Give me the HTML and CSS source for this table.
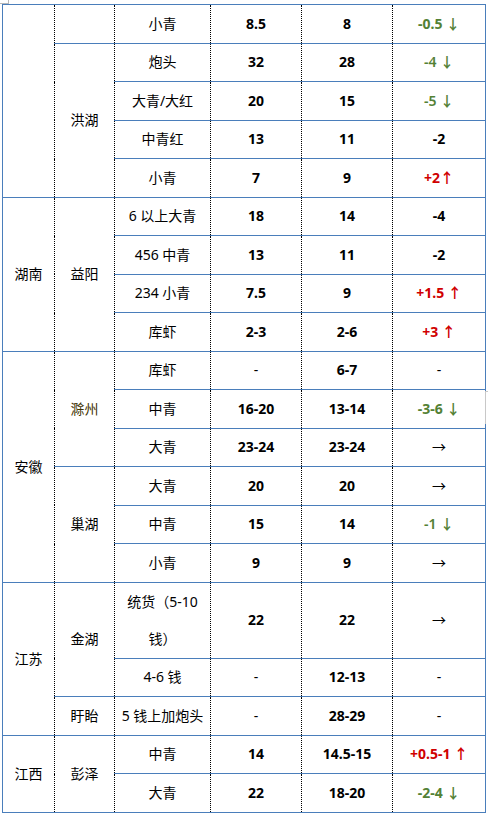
FILE: index.html
```html
<!DOCTYPE html>
<html lang="zh-CN">
<head>
<meta charset="utf-8">
<link rel="stylesheet" href="styles.css">
</head>
<body>
<div class="page">
  <span class="mark-tl"></span>
  <span class="mark-r"></span>
  <table class="price">
    <colgroup>
      <col class="c1"><col class="c2"><col class="c3"><col class="c4"><col class="c5"><col class="c6">
    </colgroup>
    <tbody>
      <tr><td rowspan="5"></td><td></td><td>小青</td><td class="n">8.5</td><td class="n">8</td><td class="n down">-0.5 ↓</td></tr>
      <tr><td rowspan="4">洪湖</td><td>炮头</td><td class="n">32</td><td class="n">28</td><td class="down lt">-4 ↓</td></tr>
      <tr><td>大青/大红</td><td class="n">20</td><td class="n">15</td><td class="down lt">-5 ↓</td></tr>
      <tr><td>中青红</td><td class="n">13</td><td class="n">11</td><td class="n">-2</td></tr>
      <tr><td>小青</td><td class="n">7</td><td class="n">9</td><td class="n up">+2↑</td></tr>

      <tr><td rowspan="4">湖南</td><td rowspan="4">益阳</td><td>6 以上大青</td><td class="n">18</td><td class="n">14</td><td class="n">-4</td></tr>
      <tr><td>456 中青</td><td class="n">13</td><td class="n">11</td><td class="n">-2</td></tr>
      <tr><td>234 小青</td><td class="n">7.5</td><td class="n">9</td><td class="n up">+1.5 ↑</td></tr>
      <tr><td>库虾</td><td class="n">2-3</td><td class="n">2-6</td><td class="n up">+3 ↑</td></tr>

      <tr><td rowspan="6">安徽</td><td rowspan="3" class="brown">滁州</td><td>库虾</td><td>-</td><td class="n">6-7</td><td>-</td></tr>
      <tr><td>中青</td><td class="n">16-20</td><td class="n">13-14</td><td class="n down">-3-6 ↓</td></tr>
      <tr><td>大青</td><td class="n">23-24</td><td class="n">23-24</td><td>→</td></tr>
      <tr><td rowspan="3">巢湖</td><td>大青</td><td class="n">20</td><td class="n">20</td><td>→</td></tr>
      <tr><td>中青</td><td class="n">15</td><td class="n">14</td><td class="down lt">-1 ↓</td></tr>
      <tr><td>小青</td><td class="n">9</td><td class="n">9</td><td>→</td></tr>

      <tr class="tall"><td rowspan="3">江苏</td><td rowspan="2">金湖</td><td class="two">统货（5-10<br>钱）</td><td class="n">22</td><td class="n">22</td><td>→</td></tr>
      <tr><td>4-6 钱</td><td>-</td><td class="n">12-13</td><td>-</td></tr>
      <tr><td>盱眙</td><td>5 钱上加炮头</td><td>-</td><td class="n">28-29</td><td>-</td></tr>

      <tr><td rowspan="2">江西</td><td rowspan="2">彭泽</td><td>中青</td><td class="n">14</td><td class="n">14.5-15</td><td class="n up">+0.5-1 ↑</td></tr>
      <tr><td>大青</td><td class="n">22</td><td class="n">18-20</td><td class="n down">-2-4 ↓</td></tr>
    </tbody>
  </table>
</div>
</body>
</html>
```
FILE: styles.css
```css
html, body {
  margin: 0;
  padding: 0;
  background: #ffffff;
}

.page {
  position: relative;
  padding: 4px 0 0 2px;
  font-family: "Noto Sans", "Noto Sans CJK SC", sans-serif;
  font-size: 14px;
  color: #000;
}

.mark-tl {
  position: absolute;
  left: 0;
  top: 0;
  width: 8px;
  height: 3px;
  border-right: 1px solid #b8b8b8;
  border-bottom: 1px solid #b8b8b8;
}

.mark-r {
  position: absolute;
  left: 485px;
  top: 391px;
  width: 3px;
  height: 32px;
  border-left: 1px solid #c8c8c8;
  border-top: 1px solid #c8c8c8;
}

.price {
  border-collapse: collapse;
  table-layout: fixed;
  width: 483px;
  border: 1px solid #4a7ebb;
}

.c1 { width: 52px; }
.c2 { width: 60px; }
.c3 { width: 96px; }
.c4 { width: 91px; }
.c5 { width: 91px; }
.c6 { width: 93px; }

.price td {
  height: 37.5px;
  padding: 0;
  text-align: center;
  vertical-align: middle;
  line-height: 20px;
  border-top: 1px solid #4a7ebb;
  border-bottom: 1px solid #4a7ebb;
  border-left: 1px dotted #000;
  border-right: 1px dotted #000;
  white-space: nowrap;
}

.price td.two {
  line-height: 37.6px;
}

.price td.n {
  font-weight: 700;
}

.price td.down {
  color: #538135;
  font-weight: 700;
}

.price td.down.lt {
  font-weight: 600;
}

.price td.up {
  color: #d00000;
}

.price td.brown {
  color: #403000;
}
```
